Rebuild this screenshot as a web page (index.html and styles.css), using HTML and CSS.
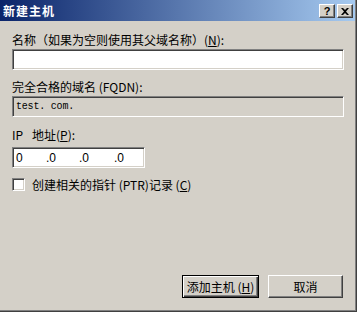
FILE: index.html
```html
<!DOCTYPE html>
<html lang="zh-CN">
<head>
<meta charset="utf-8">
<link rel="stylesheet" href="styles.css">
<title>新建主机</title>
</head>
<body>
<div class="dialog">
  <div class="titlebar">
    <span class="title">新建主机</span>
    <div class="tbtns">
      <span class="tbtn help">?</span>
      <span class="tbtn close"><svg width="8" height="7" viewBox="0 0 8 7"><path d="M0 0h2l2 2 2-2h2L5 3.5 8 7H6L4 5 2 7H0l3-3.5z" fill="#000"/></svg></span>
    </div>
  </div>
  <div class="content">
    <div class="label l1">名称（如果为空则使用其父域名称）(<u>N</u>):</div>
    <div class="edit"></div>
    <div class="label l2">完全合格的域名 (FQDN):</div>
    <div class="edit ro"><span class="mono">test. com.</span></div>
    <div class="label l3"><span class="ipw">IP</span>地址(<u>P</u>):</div>
    <div class="edit ip">
      <span class="seg s1">0</span><span class="seg s2">.0</span><span class="seg s3">.0</span><span class="seg s4">.0</span>
    </div>
    <div class="check">
      <span class="box"></span>
      <span class="clabel">创建相关的指针 (PTR)记录 (<u>C</u>)</span>
    </div>
    <div class="spacer"></div>
    <div class="buttons">
      <span class="btn default">添加主机 (<u>H</u>)</span>
      <span class="btn">取消</span>
    </div>
  </div>
</div>
</body>
</html>
```
FILE: styles.css
```css
html, body {
  margin: 0;
  padding: 0;
  background: #d4d0c8;
}
body {
  font-family: "Noto Sans CJK SC", "Liberation Sans", sans-serif;
  font-size: 12px;
  color: #000;
}
.dialog {
  width: 357px;
  height: 312px;
  box-sizing: border-box;
  border-right: 1px solid #404040;
  border-bottom: 1px solid #404040;
  box-shadow: inset -1px -1px 0 #808080;
  display: flex;
  flex-direction: column;
  padding-right: 1px;
  padding-bottom: 1px;
}
.titlebar {
  height: 21px;
  background: linear-gradient(to right, #0a246a, #a6caf0);
  display: flex;
  align-items: center;
  justify-content: space-between;
  padding: 0 2px 0 3px;
}
.title {
  color: #fff;
  font-weight: bold;
  font-size: 12px;
  line-height: 14px;
  letter-spacing: 1px;
}
.tbtns {
  display: flex;
  gap: 2px;
  margin-top: 1px;
}
.tbtn {
  width: 16px;
  height: 14px;
  box-sizing: border-box;
  background: #d4d0c8;
  border: 1px solid;
  border-color: #fff #404040 #404040 #fff;
  box-shadow: inset -1px -1px 0 #808080;
  display: flex;
  align-items: center;
  justify-content: center;
  font-family: "Liberation Sans", sans-serif;
  font-weight: bold;
  font-size: 11px;
  line-height: 12px;
}
.content {
  flex: 1;
  display: flex;
  flex-direction: column;
  padding: 0 11px 12px 12px;
}
.label {
  height: 16px;
  line-height: 16px;
  white-space: nowrap;
}
.l1 { margin-top: 11px; }
.l2 { margin-top: 9px; }
.l3 { margin-top: 10px; }
.ipw {
  display: inline-block;
  width: 20px;
}
.edit {
  height: 21px;
  margin-top: 1px;
  box-sizing: border-box;
  background: #fff;
  border: 1px solid;
  border-color: #808080 #fff #fff #808080;
  box-shadow: inset 1px 1px 0 #404040, inset -1px -1px 0 #d4d0c8;
  display: flex;
  align-items: center;
  padding-left: 3px;
}
.ro {
  background: #d4d0c8;
}
.mono {
  font-family: "Liberation Mono", monospace;
  font-size: 10px;
  letter-spacing: -0.2px;
}
.l3 + .ip { margin-top: 4px; }
.ip {
  width: 133px;
  padding-left: 2px;
}
.seg {
  font-family: "Liberation Sans", sans-serif;
  font-size: 12px;
  white-space: pre;
}
.s1 { width: 30px; padding-left: 1px; }
.s2 { width: 33px; }
.s3 { width: 35px; }
.s4 { width: 20px; }
.check {
  margin-top: 10px;
  display: flex;
  align-items: center;
  gap: 7px;
  height: 13px;
}
.box {
  width: 13px;
  height: 13px;
  box-sizing: border-box;
  background: #fff;
  border: 1px solid;
  border-color: #808080 #fff #fff #808080;
  box-shadow: inset 1px 1px 0 #404040, inset -1px -1px 0 #d4d0c8;
}
.clabel { white-space: nowrap; line-height: 16px; }
.spacer { flex: 1; }
.buttons {
  display: flex;
  justify-content: flex-end;
  gap: 9px;
  padding-right: 1px;
}
.btn {
  width: 75px;
  height: 23px;
  box-sizing: border-box;
  border: 1px solid;
  border-color: #fff #404040 #404040 #fff;
  box-shadow: inset -1px -1px 0 #808080;
  display: flex;
  align-items: center;
  justify-content: center;
  white-space: nowrap;
}
.btn.default {
  border: 1px solid #000;
  box-shadow: inset 1px 1px 0 #fff, inset -1px -1px 0 #404040, inset -2px -2px 0 #808080;
  width: 77px;
}
u { text-decoration: underline; text-underline-offset: 1px; }
```
